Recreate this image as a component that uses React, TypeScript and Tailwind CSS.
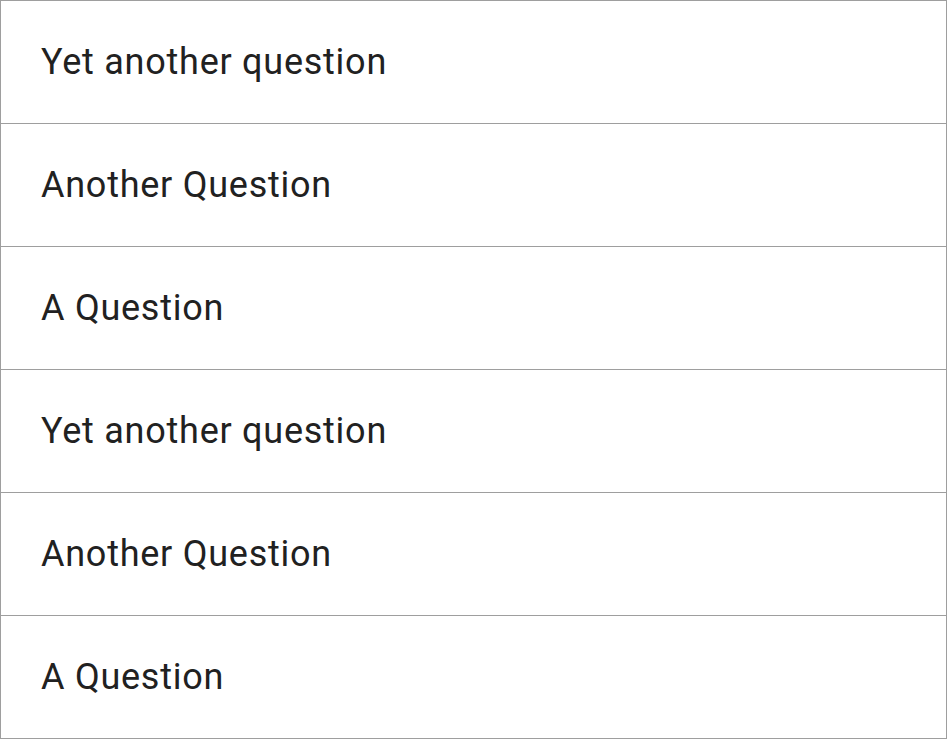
const ITEMS = [
  'Yet another question',
  'Another Question',
  'A Question',
  'Yet another question',
  'Another Question',
  'A Question',
];

export default function App() {
  return (
    <div className="min-h-[740px] w-[948px] bg-white" style={{ fontFamily: 'Roboto, "Noto Sans", sans-serif' }}>
      <ul className="w-[947px] border-l border-r border-t border-[#9e9e9e]">
        {ITEMS.map((q, i) => (
          <li
            key={i}
            className="flex h-[123px] items-center border-b border-[#9e9e9e] pl-[40px] text-[36px] tracking-[0.75px] text-[#212121]"
          >
            {q}
          </li>
        ))}
      </ul>
    </div>
  );
}
